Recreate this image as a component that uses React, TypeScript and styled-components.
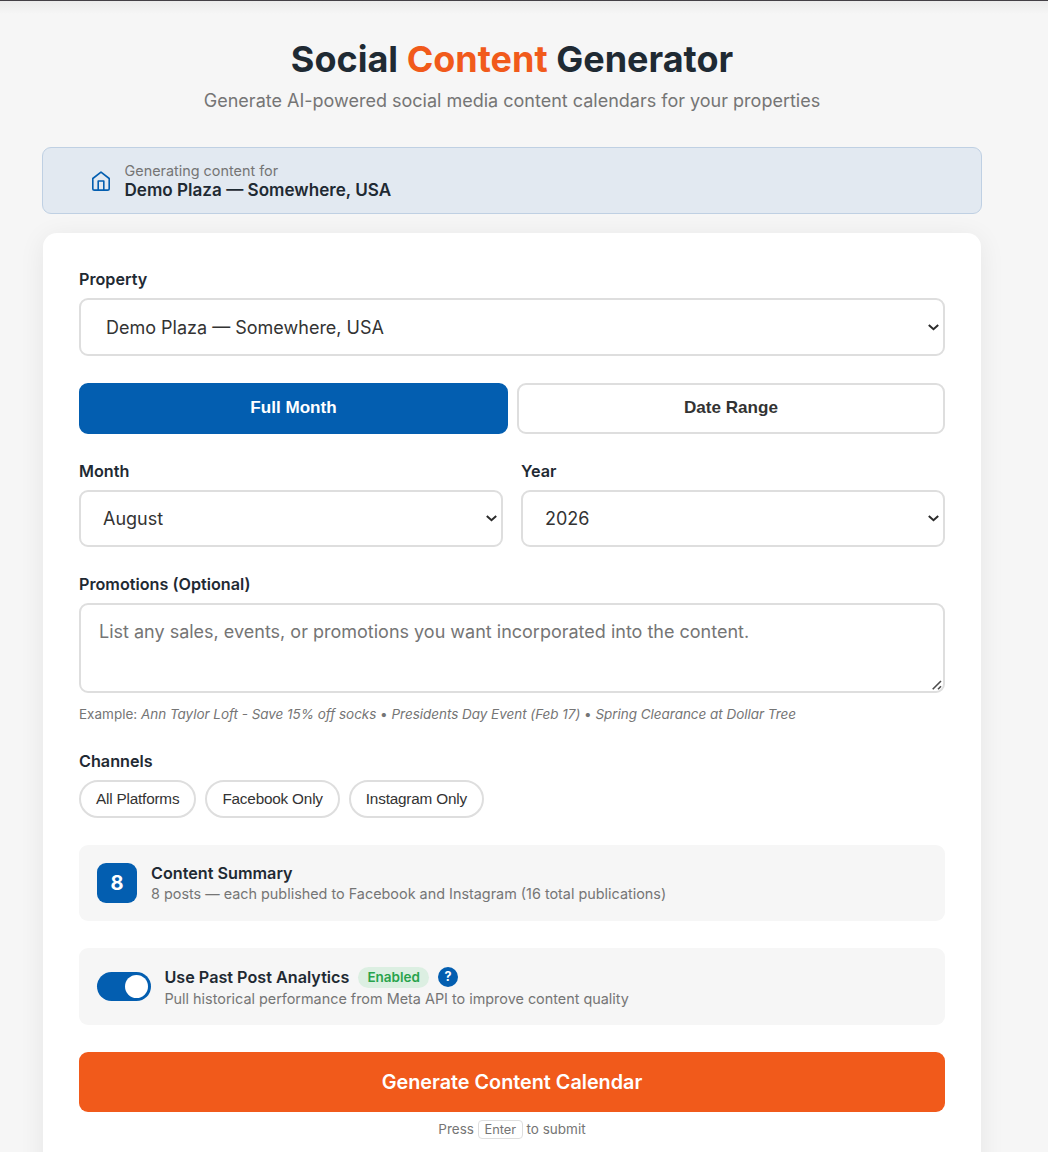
import React, { useState } from "react";
import styled, { createGlobalStyle } from "styled-components";

const GlobalStyle = createGlobalStyle`
  *, *::before, *::after { box-sizing: border-box; }
  html, body { margin: 0; padding: 0; }
  body {
    background: #f6f6f6;
    color: #333;
    font-family: Inter, "Liberation Sans", sans-serif;
    height: 1152px;
    overflow: hidden;
  }
`;

const Page = styled.div`
  height: 1152px;
  overflow: hidden;
  border-top: 1px solid #444046;
  background: linear-gradient(#ebebeb, #f6f6f6 13px);
`;

const Container = styled.main`
  width: 1024px;
  padding: 36px 43px 0;
`;

const Header = styled.header`
  text-align: center;
  height: 110px;
`;

const Title = styled.h1`
  margin: 0;
  font-size: 36px;
  line-height: 44px;
  font-weight: 700;
  color: #1f2a33;
  span { color: #f15a1b; }
`;

const Subtitle = styled.p`
  margin: 9px 0 0;
  font-size: 18px;
  line-height: 22px;
  color: #757575;
`;

const Banner = styled.section`
  display: flex;
  align-items: center;
  gap: 13.5px;
  height: 67px;
  margin: 0 -1px 19px;
  padding: 0 48px;
  border: 1px solid #bfd0e3;
  border-radius: 9px;
  background: #e2e9f1;
  svg { display: block; flex: none; }
`;

const BannerLabel = styled.div`
  font-size: 14.4px;
  line-height: 18px;
  color: #757575;
`;

const BannerName = styled.div`
  font-size: 17.1px;
  line-height: 20px;
  font-weight: 600;
  color: #1f2a33;
`;

const Card = styled.form`
  display: flex;
  flex-direction: column;
  gap: 27px;
  height: 1000px;
  padding: 36px;
  border-radius: 14px;
  background: #fff;
  box-shadow: 0 4px 27px rgba(0, 0, 0, 0.07);
`;

const Field = styled.div`
  display: flex;
  flex-direction: column;
`;

const Label = styled.label`
  height: 20px;
  margin-bottom: 9px;
  font-size: 16.2px;
  line-height: 20px;
  font-weight: 600;
  color: #1f2a33;
`;

const ControlWrap = styled.div`
  position: relative;
`;

const Chevron = styled.svg`
  position: absolute;
  right: 6px;
  top: calc(50% - 3.5px);
  pointer-events: none;
`;

const Grip = styled.svg`
  position: absolute;
  right: 3px;
  bottom: 3px;
  pointer-events: none;
`;

const Select = styled.select<{ $height: number; $indent: number }>`
  display: block;
  appearance: none;
  width: 100%;
  height: ${(p) => p.$height}px;
  padding: 0 0 0 ${(p) => p.$indent + 4}px;
  border: 2px solid #dedede;
  border-radius: 9px;
  background: #fff;
  color: #333;
  font-family: inherit;
  font-size: 18px;
`;

const Segments = styled.div`
  display: grid;
  grid-template-columns: 429px 428px;
  gap: 9px;
`;

const Segment = styled.button<{ $active?: boolean }>`
  height: 51px;
  padding: 0 0 2px;
  border: 2px solid ${(p) => (p.$active ? "#035eb0" : "#dedede")};
  border-radius: 9px;
  background: ${(p) => (p.$active ? "#035eb0" : "#fff")};
  color: ${(p) => (p.$active ? "#fff" : "#333")};
  font-family: "Liberation Sans", Arial, sans-serif;
  font-size: 17.1px;
  font-weight: 700;
`;

const Columns = styled.div`
  display: grid;
  grid-template-columns: 1fr 1fr;
  gap: 18px;
`;

const TextArea = styled.textarea`
  display: block;
  width: 100%;
  height: 90px;
  padding: 16px 18px 14px;
  border: 2px solid #dedede;
  border-radius: 9px;
  background: #fff;
  color: #333;
  font-family: inherit;
  font-size: 18px;
  line-height: 22px;
  resize: none;
  &::placeholder { color: #757575; }
`;

const Hint = styled.p`
  margin: 11px 0 0;
  height: 20px;
  font-size: 13.5px;
  line-height: 20px;
  color: #757575;
  em { letter-spacing: -0.035px; }
`;

const Chips = styled.div`
  display: flex;
  gap: 9px;
`;

const Chip = styled.button`
  height: 38px;
  padding: 0 15px 1px;
  border: 2px solid #dedede;
  border-radius: 19px;
  background: #fff;
  color: #333;
  font-family: "Liberation Sans", Arial, sans-serif;
  font-size: 15.3px;
  letter-spacing: -0.19px;
`;

const Panel = styled.section<{ $height: number; $gap?: number }>`
  display: flex;
  align-items: center;
  gap: ${(p) => p.$gap ?? 14}px;
  height: ${(p) => p.$height}px;
  padding: 0 18px;
  border-radius: 9px;
  background: #f6f6f6;
`;

const Count = styled.div`
  display: grid;
  place-items: center;
  width: 40px;
  height: 40px;
  border-radius: 9px;
  background: #035eb0;
  color: #fff;
  font-size: 20px;
  font-weight: 700;
`;

const PanelBody = styled.div<{ $drop?: number }>`
  padding-top: ${(p) => p.$drop ?? 0}px;
`;

const PanelTitle = styled.div`
  display: flex;
  align-items: center;
  gap: 9px;
  height: 21px;
  font-size: 16.2px;
  font-weight: 600;
  color: #1f2a33;
`;

const PanelText = styled.div`
  font-size: 14.4px;
  line-height: 21px;
  color: #757575;
`;

const Toggle = styled.button`
  display: flex;
  justify-content: flex-end;
  align-items: center;
  flex: none;
  width: 54px;
  height: 29px;
  padding: 0 3px;
  border: 0;
  border-radius: 15px;
  background: #035eb0;
`;

const Knob = styled.span`
  width: 23px;
  height: 23px;
  border-radius: 50%;
  background: #fff;
`;

const Badge = styled.span`
  height: 21px;
  padding: 0 9px;
  border-radius: 11px;
  background: #dcefe2;
  color: #28a34c;
  font-size: 13.5px;
  line-height: 21px;
  font-weight: 600;
`;

const Help = styled.span`
  width: 20px;
  height: 20px;
  border-radius: 50%;
  background: #035eb0;
  color: #fff;
  font-size: 12.6px;
  line-height: 20px;
  font-weight: 700;
  text-align: center;
`;

const Submit = styled.button`
  width: 100%;
  height: 60px;
  padding: 0;
  border: 0;
  border-radius: 9px;
  background: #f15a1b;
  color: #fff;
  font-family: inherit;
  font-size: 19.8px;
  font-weight: 600;
`;

const Shortcut = styled.p`
  display: flex;
  justify-content: center;
  align-items: center;
  gap: 4px;
  margin: 7px 0 0;
  height: 20px;
  font-size: 13.5px;
  line-height: 20px;
  color: #757575;
  kbd {
    height: 19px;
    padding: 0 5.5px;
    border: 1px solid #dedede;
    border-radius: 4px;
    font-family: inherit;
    font-size: 12.8px;
    line-height: 18px;
  }
`;

const HomeIcon = () => (
  <svg width="20" height="20" viewBox="0 0 20 20" fill="none" stroke="#035eb0" strokeWidth="1.6" strokeLinecap="round" strokeLinejoin="round">
    <path d="M1.8 7.5 10 1.1l8.2 6.4v9.9a1.7 1.7 0 0 1-1.7 1.7h-13a1.7 1.7 0 0 1-1.7-1.7Z" />
    <path d="M7.2 19V10h5.6v9" />
  </svg>
);

const ChevronIcon = () => (
  <Chevron width="11" height="7" viewBox="0 0 11 7" fill="none" stroke="#2b2b2b" strokeWidth="2">
    <path d="M.8 1 5.5 5.2 10.2 1" />
  </Chevron>
);

const GripIcon = () => (
  <Grip width="10" height="10" viewBox="0 0 10 10" fill="none" stroke="#4c4c4c" strokeWidth="1.6">
    <path d="M.7 9.3 9 1M6 9.3 9 6.3" />
  </Grip>
);

export default function App() {
  const [property, setProperty] = useState("Demo Plaza — Somewhere, USA");
  return (
    <>
      <GlobalStyle />
      <Page>
        <Container>
          <Header>
            <Title>
              Social <span>Content</span> Generator
            </Title>
            <Subtitle>Generate AI-powered social media content calendars for your properties</Subtitle>
          </Header>
          <Banner>
            <HomeIcon />
            <div>
              <BannerLabel>Generating content for</BannerLabel>
              <BannerName>{property}</BannerName>
            </div>
          </Banner>
          <Card onSubmit={(e) => e.preventDefault()}>
            <Field>
              <Label htmlFor="property">Property</Label>
              <ControlWrap>
                <Select id="property" $height={58} $indent={21} value={property} onChange={(e) => setProperty(e.target.value)}>
                  <option>Demo Plaza — Somewhere, USA</option>
                </Select>
                <ChevronIcon />
              </ControlWrap>
            </Field>
            <Segments>
              <Segment type="button" $active>Full Month</Segment>
              <Segment type="button">Date Range</Segment>
            </Segments>
            <Columns>
              <Field>
                <Label htmlFor="month">Month</Label>
                <ControlWrap>
                  <Select id="month" $height={57} $indent={18}>
                    <option>August</option>
                  </Select>
                  <ChevronIcon />
                </ControlWrap>
              </Field>
              <Field>
                <Label htmlFor="year">Year</Label>
                <ControlWrap>
                  <Select id="year" $height={57} $indent={18}>
                    <option>2026</option>
                  </Select>
                  <ChevronIcon />
                </ControlWrap>
              </Field>
            </Columns>
            <Field>
              <Label htmlFor="promotions">Promotions (Optional)</Label>
              <ControlWrap>
                <TextArea id="promotions" placeholder="List any sales, events, or promotions you want incorporated into the content." />
                <GripIcon />
              </ControlWrap>
              <Hint>
                Example: <em>Ann Taylor Loft - Save 15% off socks</em> • <em>Presidents Day Event (Feb 17)</em> •{" "}
                <em>Spring Clearance at Dollar Tree</em>
              </Hint>
            </Field>
            <Field>
              <Label as="div">Channels</Label>
              <Chips>
                <Chip type="button">All Platforms</Chip>
                <Chip type="button">Facebook Only</Chip>
                <Chip type="button">Instagram Only</Chip>
              </Chips>
            </Field>
            <Panel $height={76}>
              <Count>8</Count>
              <PanelBody>
                <PanelTitle>Content Summary</PanelTitle>
                <PanelText>8 posts — each published to Facebook and Instagram (16 total publications)</PanelText>
              </PanelBody>
            </Panel>
            <Panel $height={77} $gap={13.4}>
              <Toggle type="button" aria-label="Use Past Post Analytics">
                <Knob />
              </Toggle>
              <PanelBody $drop={2}>
                <PanelTitle>
                  Use Past Post Analytics
                  <Badge>Enabled</Badge>
                  <Help>?</Help>
                </PanelTitle>
                <PanelText>Pull historical performance from Meta API to improve content quality</PanelText>
              </PanelBody>
            </Panel>
            <div>
              <Submit type="submit">Generate Content Calendar</Submit>
              <Shortcut>
                Press <kbd>Enter</kbd> to submit
              </Shortcut>
            </div>
          </Card>
        </Container>
      </Page>
    </>
  );
}
